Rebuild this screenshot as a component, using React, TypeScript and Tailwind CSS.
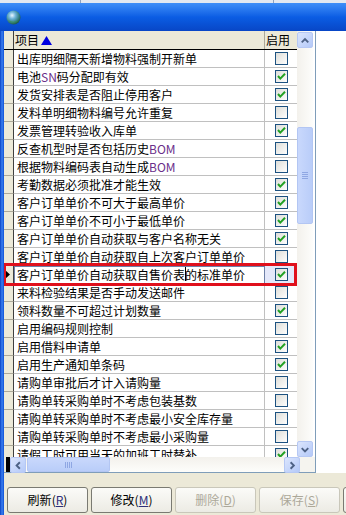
import React from 'react';

type Row = { label: React.ReactNode; on: boolean };

const Latin = ({ children }: { children: React.ReactNode }) => (
  <span className="text-[#6b2f8a]">{children}</span>
);

const rows: Row[] = [
  { label: '出库明细隔天新增物料强制开新单', on: false },
  { label: <>电池<Latin>SN</Latin>码分配即有效</>, on: true },
  { label: '发货安排表是否阻止停用客户', on: true },
  { label: '发料单明细物料编号允许重复', on: false },
  { label: '发票管理转验收入库单', on: true },
  { label: <>反查机型时是否包括历史<Latin>BOM</Latin></>, on: false },
  { label: <>根据物料编码表自动生成<Latin>BOM</Latin></>, on: false },
  { label: '考勤数据必须批准才能生效', on: true },
  { label: '客户订单单价不可大于最高单价', on: true },
  { label: '客户订单单价不可小于最低单价', on: true },
  { label: '客户订单单价自动获取与客户名称无关', on: true },
  { label: '客户订单单价自动获取自上次客户订单单价', on: false },
  { label: '客户订单单价自动获取自售价表的标准单价', on: true },
  { label: '来料检验结果是否手动发送邮件', on: false },
  { label: '领料数量不可超过计划数量', on: true },
  { label: '启用编码规则控制', on: false },
  { label: '启用借料申请单', on: true },
  { label: '启用生产通知单条码', on: true },
  { label: '请购单审批后才计入请购量', on: false },
  { label: '请购单转采购单时不考虑包装基数', on: false },
  { label: '请购单转采购单时不考虑最小安全库存量', on: false },
  { label: '请购单转采购单时不考虑最小采购量', on: false },
  { label: '请假工时可用当天的加班工时替补', on: true },
];

const CURRENT = 12;

function CheckBox({ on }: { on: boolean }) {
  return (
    <svg width="13" height="13" viewBox="0 0 13 13">
      <defs>
        <linearGradient id="cbg" x1="0" y1="0" x2="1" y2="1">
          <stop offset="0" stopColor="#dcdcd7" />
          <stop offset="1" stopColor="#ffffff" />
        </linearGradient>
      </defs>
      <rect x="0.5" y="0.5" width="12" height="12" fill="url(#cbg)" stroke="#1c5180" />
      {on && (
        <polyline points="3,6 5.3,8.6 10,3.8" fill="none" stroke="#21a121" strokeWidth="2" />
      )}
    </svg>
  );
}

function Chevron({ dir }: { dir: 'up' | 'down' | 'left' | 'right' }) {
  const pts = {
    up: '4,9.5 7.5,6 11,9.5',
    down: '4,6 7.5,9.5 11,6',
    left: '9.5,4 6,7.5 9.5,11',
    right: '6,4 9.5,7.5 6,11',
  }[dir];
  return (
    <svg width="15" height="15" viewBox="0 0 15 15">
      <polyline points={pts} fill="none" stroke="#4d6185" strokeWidth="2" />
    </svg>
  );
}

function ArrowBtn({ dir }: { dir: 'up' | 'down' | 'left' | 'right' }) {
  return (
    <div className="flex h-[16px] w-[16px] shrink-0 items-center justify-center rounded-[2px] border border-[#b6c8f4] bg-gradient-to-br from-[#dbe5fd] to-[#b4c9f8]">
      <Chevron dir={dir} />
    </div>
  );
}

function Button({ label, hot, disabled }: { label?: string; hot?: string; disabled?: boolean }) {
  return (
    <div
      className={`flex h-[26px] w-[81px] shrink-0 items-center justify-center rounded-[3px] border bg-gradient-to-b from-[#fbfbf8] to-[#ecebe4] text-[12px] ${
        disabled ? 'border-[#c9c7ba] text-[#aca899]' : 'border-[#7a7a72] text-black'
      }`}
    >
      {label && (
        <>
          {label}(<span className={`underline ${disabled ? '' : 'text-[#2c2f7a]'}`}>{hot}</span>)
        </>
      )}
    </div>
  );
}

export default function App() {
  return (
    <div
      className="flex h-[515px] w-[346px] flex-col overflow-hidden bg-white text-black"
      style={{ fontFamily: '"Noto Sans CJK SC", "Noto Sans", sans-serif' }}
    >
      {/* strip above the title */}
      <div className="flex h-[3px] shrink-0 bg-[#e3e9f1]">
        <div className="ml-[80px] w-px bg-[#8fa3bf]" />
        <div className="ml-[192px] w-px bg-[#8fa3bf]" />
      </div>

      {/* title bar */}
      <div className="flex h-[28px] shrink-0 items-center bg-gradient-to-b from-[#3f8ff8] via-[#0b5de4] to-[#0846c6] pl-[6px]">
        <svg width="15" height="15" viewBox="0 0 15 15">
          <defs>
            <radialGradient id="globe" cx="0.4" cy="0.35" r="0.7">
              <stop offset="0" stopColor="#e9f7ff" />
              <stop offset="0.35" stopColor="#6fb4d8" />
              <stop offset="0.75" stopColor="#2f7a7a" />
              <stop offset="1" stopColor="#1d4f3a" />
            </radialGradient>
          </defs>
          <circle cx="7.5" cy="7.5" r="7" fill="url(#globe)" />
          <path d="M2 10 Q7.5 14 13 10 Q10 12.5 7.5 12.5 Q4.5 12.5 2 10Z" fill="#3f9a3c" />
        </svg>
      </div>

      <div className="flex min-h-0 flex-1">
        {/* window left frame */}
        <div className="w-[4px] shrink-0 bg-gradient-to-r from-[#0a3fc4] via-[#3b7ff0] to-[#0b4fd6]" />

        <div className="flex min-w-0 flex-1 flex-col">
          <div className="flex h-[442px] shrink-0">
            {/* grid with scrollbars */}
            <div className="flex w-[312px] shrink-0 flex-col border-r border-b border-[#7f9db9]">
              <div className="flex h-[426px] shrink-0">
                <div className="relative w-[293px] shrink-0 overflow-hidden">
                  {/* header */}
                  <div className="flex h-[19px] border-b border-black bg-[#ece9d8] text-[12px]">
                    <div className="w-[10px] shrink-0 border-r border-[#404040] bg-[#ece9d8]" />
                    <div className="flex w-[251px] shrink-0 items-center gap-[2px] border-r border-[#aca899] pl-[1px]">
                      <span>项目</span>
                      <svg width="11" height="9" viewBox="0 0 11 9">
                        <polygon points="5.5,0 11,9 0,9" fill="#0000e0" />
                      </svg>
                    </div>
                    <div className="flex w-[32px] shrink-0 items-center pl-[1px]">启用</div>
                  </div>

                  {/* rows */}
                  {rows.map((r, i) => {
                    const cur = i === CURRENT;
                    return (
                      <div key={i} className="flex h-[18px] text-[12px]">
                        <div className="flex w-[10px] shrink-0 items-center border-r border-b border-r-[#404040] border-b-[#aca899] bg-[#ece9d8]">
                          {cur && (
                            <svg width="6" height="9" viewBox="0 0 6 9" className="ml-[1px]">
                              <polygon points="0,0 5,4.5 0,9" fill="#000" />
                            </svg>
                          )}
                        </div>
                        <div
                          className={`flex w-[251px] shrink-0 items-center overflow-hidden whitespace-nowrap border-r border-b border-[#c0c0c0] pl-[3px] ${
                            cur ? 'outline outline-1 -outline-offset-1 outline-[#6d7fa6]' : ''
                          }`}
                        >
                          <span className="relative">
                            {r.label}
                            {cur && <span className="absolute left-[168px] top-[1px] h-[14px] w-px bg-black" />}
                          </span>
                        </div>
                        <div
                          className={`flex w-[32px] shrink-0 items-center justify-center border-b border-[#c0c0c0] ${
                            cur ? 'bg-[#e4e8fa]' : ''
                          }`}
                        >
                          <CheckBox on={r.on} />
                        </div>
                      </div>
                    );
                  })}

                  {/* red annotation box around the current row */}
                  <div className="pointer-events-none absolute left-[-1px] top-[232px] h-[23px] w-[294px] border-[3px] border-[#e0101c]" />
                </div>

                {/* vertical scrollbar */}
                <div className="flex w-[16px] shrink-0 flex-col bg-gradient-to-r from-[#f3f1ec] to-[#fdfdfb] pt-[1px]">
                  <ArrowBtn dir="up" />
                  <div className="h-[79px] shrink-0" />
                  <div className="flex h-[97px] shrink-0 items-center justify-center rounded-[2px] border border-[#b3c6f3] bg-gradient-to-r from-[#c9d8fc] to-[#b9cdf9]">
                    <div className="flex w-[6px] flex-col gap-[1px]">
                      <div className="h-px bg-[#8fa7e3]" />
                      <div className="h-px bg-[#8fa7e3]" />
                      <div className="h-px bg-[#8fa7e3]" />
                      <div className="h-px bg-[#8fa7e3]" />
                    </div>
                  </div>
                  <div className="flex-1" />
                  <ArrowBtn dir="down" />
                </div>
              </div>

              {/* horizontal scrollbar */}
              <div className="flex h-[15px] shrink-0 bg-gradient-to-b from-[#f3f1ec] to-[#fdfdfb]">
                <div className="w-[2px] shrink-0 bg-[#ece9d8]" />
                <div className="w-[4px] shrink-0 bg-black" />
                <ArrowBtn dir="left" />
                <div className="ml-[1px] flex w-[83px] shrink-0 items-center justify-center rounded-[2px] border border-[#b3c6f3] bg-gradient-to-b from-[#c9d8fc] to-[#b9cdf9]">
                  <div className="flex h-[6px] gap-[1px]">
                    <div className="w-px bg-[#8fa7e3]" />
                    <div className="w-px bg-[#8fa7e3]" />
                    <div className="w-px bg-[#8fa7e3]" />
                    <div className="w-px bg-[#8fa7e3]" />
                  </div>
                </div>
                <div className="flex-1" />
                <ArrowBtn dir="right" />
                <div className="w-[15px] shrink-0 bg-[#f5f4ef]" />
              </div>
            </div>
            <div className="flex-1 bg-white" />
          </div>

          {/* button bar */}
          <div className="flex flex-1 items-start gap-[3px] bg-[#ece9d8] pl-[3px] pt-[14px]">
            <Button label="刷新" hot="R" />
            <Button label="修改" hot="M" />
            <Button label="删除" hot="D" disabled />
            <Button label="保存" hot="S" disabled />
            <Button />
          </div>
        </div>
      </div>
    </div>
  );
}
